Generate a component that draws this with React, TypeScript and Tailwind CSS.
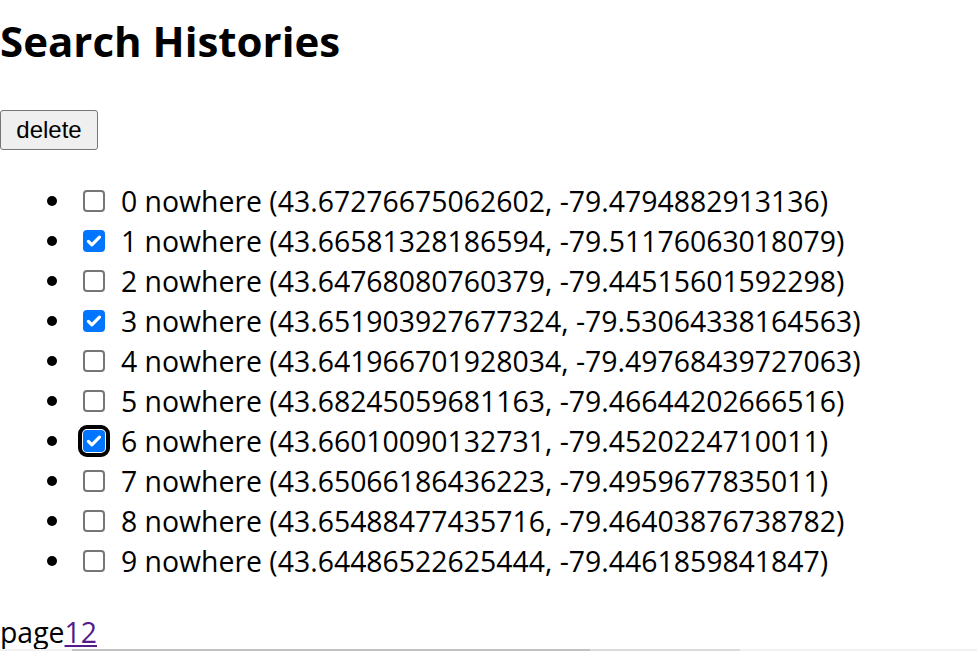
import React from 'react';

// search history rows, as listed on the page
const histories = [
  { id: 0, name: 'nowhere', lat: '43.67276675062602', lng: '-79.4794882913136', checked: false },
  { id: 1, name: 'nowhere', lat: '43.66581328186594', lng: '-79.51176063018079', checked: true },
  { id: 2, name: 'nowhere', lat: '43.64768080760379', lng: '-79.44515601592298', checked: false },
  { id: 3, name: 'nowhere', lat: '43.651903927677324', lng: '-79.53064338164563', checked: true },
  { id: 4, name: 'nowhere', lat: '43.641966701928034', lng: '-79.49768439727063', checked: false },
  { id: 5, name: 'nowhere', lat: '43.68245059681163', lng: '-79.46644202666516', checked: false },
  { id: 6, name: 'nowhere', lat: '43.66010090132731', lng: '-79.4520224710011', checked: true, focused: true },
  { id: 7, name: 'nowhere', lat: '43.65066186436223', lng: '-79.4959677835011', checked: false },
  { id: 8, name: 'nowhere', lat: '43.65488477435716', lng: '-79.46403876738782', checked: false },
  { id: 9, name: 'nowhere', lat: '43.64486522625444', lng: '-79.4461859841847', checked: false },
];

function CheckBox({ checked, focused }: { checked: boolean; focused?: boolean }) {
  return (
    <span
      className={`flex h-[22px] w-[22px] shrink-0 items-center justify-center rounded-[4px] ${
        checked ? 'bg-[#0075ff]' : 'border-2 border-[#767676] bg-white'
      } ${focused ? 'outline-[4px] outline-solid outline-black outline-offset-[1px]' : ''}`}
    >
      {checked && (
        <svg className="h-[18px] w-[18px]" viewBox="0 0 16 16" fill="none">
          <path d="M3 8.3l3.1 3.1 6.8-6.9" stroke="white" strokeWidth={2.8} strokeLinecap="round" strokeLinejoin="round" />
        </svg>
      )}
    </span>
  );
}

export default function App() {
  return (
    <div className="relative h-[651px] overflow-hidden bg-white text-black [font-family:'Open_Sans','Noto_Sans',sans-serif]">
      <h1 className="text-[42px] font-bold leading-[82px]">Search Histories</h1>

      <button className="mt-[28px] flex h-[40px] w-[98px] items-center justify-center rounded-[3px] border border-[#767676] bg-[#efefef] text-[24px] [font-family:'Liberation_Sans',Arial,sans-serif]">
        delete
      </button>

      <ul className="mt-[31px] pl-[47px] text-[28.4px]">
        {histories.map((h) => (
          <li key={h.id} className="flex h-[40px] items-center">
            <span className="h-[10px] w-[10px] shrink-0 rounded-full bg-black" />
            <span className="ml-[26px]">
              <CheckBox checked={h.checked} focused={h.focused} />
            </span>
            <span className="ml-[16px] whitespace-nowrap">
              {h.id} {h.name} ({h.lat}, {h.lng})
            </span>
          </li>
        ))}
      </ul>

      <div className="mt-[31px] flex h-[40px] items-center text-[28.4px]">
        <span>page</span>
        <a href="#" className="text-[#551a8b] underline">
          12
        </a>
      </div>

      {/* horizontal scrollbar strip at the very bottom */}
      <div className="absolute bottom-0 left-0 flex h-[2px] w-full bg-[#f1f1f1]">
        <div className="ml-[72px] w-[518px] bg-[#c1c1c1]" />
        <div className="w-[150px] bg-[#dadada]" />
      </div>
    </div>
  );
}
